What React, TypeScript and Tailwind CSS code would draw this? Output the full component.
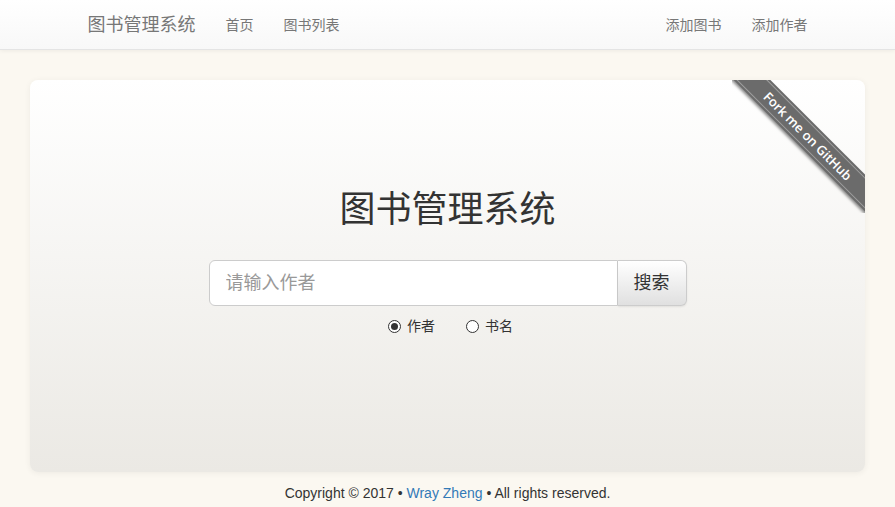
const font = "font-['Liberation_Sans','Noto_Sans_CJK_SC',sans-serif]";

const leftLinks = ["首页", "图书列表"];
const rightLinks = ["添加图书", "添加作者"];

function Radio({ label, checked }: { label: string; checked?: boolean }) {
  return (
    <label className="flex items-center gap-[6px] text-[14px] leading-5 text-[#333]">
      <span className="flex h-[13px] w-[13px] items-center justify-center rounded-full border border-[#333] bg-white">
        {checked && <span className="h-[7px] w-[7px] rounded-full bg-[#333]" />}
      </span>
      {label}
    </label>
  );
}

function Ribbon() {
  return (
    <div className="pointer-events-none absolute right-0 top-0 h-[133px] w-[133px] overflow-hidden">
      <div className="absolute left-[-34px] top-[43px] w-[220px] rotate-45 bg-[#6b6b6b] py-[2px] shadow-[0_2px_3px_rgba(0,0,0,0.45)]">
        <div className="border-y border-[#a0a0a0] text-center font-['Open_Sans',sans-serif] text-[13px] font-semibold leading-[20px] text-white">
          Fork me on GitHub
        </div>
      </div>
    </div>
  );
}

export default function App() {
  return (
    <div className={`${font} min-h-[507px] bg-[#fbf8f1]`}>
      <nav className="h-[50px] border-b border-[#e4e4e4] bg-gradient-to-b from-white to-[#f8f8f8] shadow-[0_1px_4px_rgba(0,0,0,0.06)]">
        <div className="mx-auto flex h-full w-[750px] items-center px-[15px]">
          <span className="pr-[15px] text-[18px] leading-5 text-[#777]">图书管理系统</span>
          {leftLinks.map((l) => (
            <a key={l} className="px-[15px] text-[14px] leading-5 text-[#777]">
              {l}
            </a>
          ))}
          <div className="-mr-[15px] ml-auto flex">
            {rightLinks.map((l) => (
              <a key={l} className="px-[15px] text-[14px] leading-5 text-[#777]">
                {l}
              </a>
            ))}
          </div>
        </div>
      </nav>

      <main className="px-[30px] pt-[30px]">
        <section className="relative flex h-[392px] flex-col items-center rounded-[8px] bg-gradient-to-b from-white to-[#ebe9e4] pt-[110px] shadow-[0_1px_6px_rgba(0,0,0,0.06)]">
          <Ribbon />
          <h1 className="text-[36px] leading-[40px] text-[#333]">图书管理系统</h1>
          <div className="mt-[30px] flex h-[46px] w-[478px]">
            <input
              className="h-full min-w-0 flex-1 rounded-l-[6px] border border-[#ccc] bg-white px-4 text-[18px] text-[#333] outline-none placeholder:text-[#999]"
              placeholder="请输入作者"
            />
            <button className="h-full w-[69px] rounded-r-[6px] border border-l-0 border-[#ccc] bg-gradient-to-b from-white to-[#e0e0e0] text-[18px] text-[#333] shadow-[0_1px_2px_rgba(0,0,0,0.08)]">
              搜索
            </button>
          </div>
          <div className="mt-[10px] flex gap-[31px] pl-[6px]">
            <Radio label="作者" checked />
            <Radio label="书名" />
          </div>
        </section>
      </main>

      <footer className="pt-[11px] text-center text-[14px] leading-5 text-[#333]">
        Copyright © 2017 • <a className="text-[#337ab7]">Wray Zheng</a> • All rights reserved.
      </footer>
    </div>
  );
}
